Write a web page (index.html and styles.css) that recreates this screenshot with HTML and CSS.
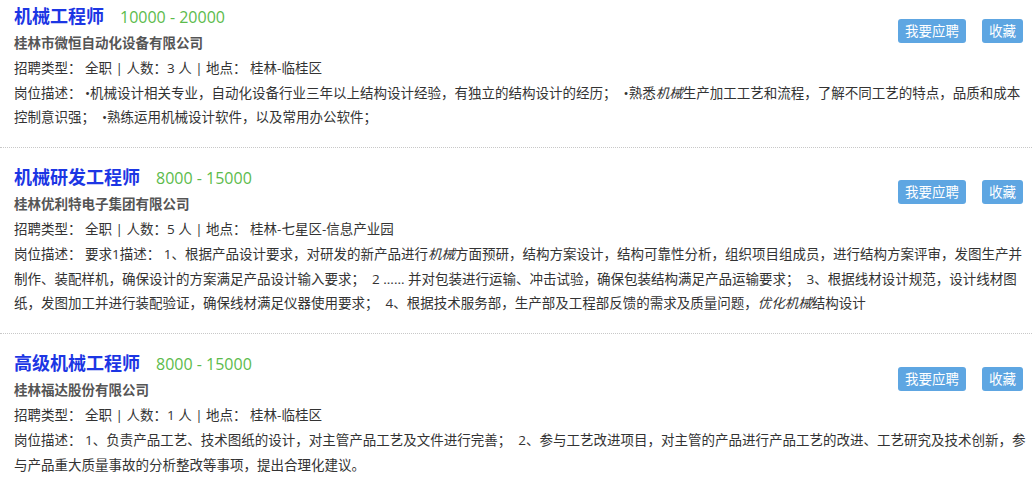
FILE: index.html
```html
<!DOCTYPE html>
<html lang="zh-CN">
<head>
<meta charset="utf-8">
<title>职位列表</title>
<link rel="stylesheet" href="styles.css">
</head>
<body>
<div class="job-list">
  <div class="job">
    <div class="job-head">
      <a class="job-title">机械工程师</a><span class="salary">10000 - 20000</span>
    </div>
    <div class="actions"><a class="btn">我要应聘</a><a class="btn">收藏</a></div>
    <div class="company">桂林市微恒自动化设备有限公司</div>
    <div class="info">招聘类型：&nbsp;全职 | 人数：3 人 | 地点：&nbsp;桂林-临桂区</div>
    <div class="desc">岗位描述：&nbsp;•机械设计相关专业，自动化设备行业三年以上结构设计经验，有独立的结构设计的经历；&nbsp; •熟悉<em>机械</em>生产加工工艺和流程，了解不同工艺的特点，品质和成本控制意识强；&nbsp; •熟练运用机械设计软件，以及常用办公软件；</div>
  </div>
  <div class="job">
    <div class="job-head">
      <a class="job-title">机械研发工程师</a><span class="salary">8000 - 15000</span>
    </div>
    <div class="actions"><a class="btn">我要应聘</a><a class="btn">收藏</a></div>
    <div class="company">桂林优利特电子集团有限公司</div>
    <div class="info">招聘类型：&nbsp;全职 | 人数：5 人 | 地点：&nbsp;桂林-七星区-信息产业园</div>
    <div class="desc">岗位描述：&nbsp;要求1描述：&nbsp;1、根据产品设计要求，对研发的新产品进行<em>机械</em>方面预研，结构方案设计，结构可靠性分析，组织项目组成员，进行结构方案评审，发图生产并制作、装配样机，确保设计的方案满足产品设计输入要求；&nbsp; 2 ...... 并对包装进行运输、冲击试验，确保包装结构满足产品运输要求；&nbsp; 3、根据线材设计规范，设计线材图纸，发图加工并进行装配验证，确保线材满足仪器使用要求；&nbsp; 4、根据技术服务部，生产部及工程部反馈的需求及质量问题，<em>优化机械</em>结构设计</div>
  </div>
  <div class="job">
    <div class="job-head">
      <a class="job-title">高级机械工程师</a><span class="salary">8000 - 15000</span>
    </div>
    <div class="actions"><a class="btn">我要应聘</a><a class="btn">收藏</a></div>
    <div class="company">桂林福达股份有限公司</div>
    <div class="info">招聘类型：&nbsp;全职 | 人数：1 人 | 地点：&nbsp;桂林-临桂区</div>
    <div class="desc">岗位描述：&nbsp;1、负责产品工艺、技术图纸的设计，对主管产品工艺及文件进行完善；&nbsp; 2、参与工艺改进项目，对主管的产品进行产品工艺的改进、工艺研究及技术创新，参与产品重大质量事故的分析整改等事项，提出合理化建议。</div>
  </div>
</div>
</body>
</html>
```

FILE: styles.css
```css
html, body {
  margin: 0;
  padding: 0;
  background: #ffffff;
}

body {
  font-family: "Open Sans", "Noto Sans CJK SC", sans-serif;
  font-size: 13.5px;
  color: #333333;
}

.job-list {
  display: flex;
  flex-direction: column;
}

.job {
  display: grid;
  grid-template-columns: 1fr auto;
  padding: 17px 9px 17px 14px;
  border-bottom: 1px dotted #c8c8c8;
}

.job:first-child {
  padding-top: 3.5px;
}

.job:last-child {
  border-bottom: none;
}

.job-head {
  grid-column: 1;
  grid-row: 1;
  line-height: 25px;
  white-space: nowrap;
}

.job-title {
  font-size: 18px;
  font-weight: bold;
  color: #1c36e4;
  text-decoration: none;
}

.salary {
  margin-left: 16px;
  font-size: 16px;
  color: #5cbb4c;
}

.actions {
  grid-column: 2;
  grid-row: 1 / 3;
  display: flex;
  gap: 16px;
  align-self: start;
  margin-top: 15.5px;
}

.btn {
  display: block;
  height: 24px;
  line-height: 24px;
  padding: 0 7px;
  background: #5ea6e2;
  color: #ffffff;
  border-radius: 3px;
  font-size: 13.5px;
}

.company {
  grid-column: 1;
  grid-row: 2;
  line-height: 25px;
  font-weight: bold;
  color: #555555;
}

.info {
  grid-column: 1 / 3;
  grid-row: 3;
  line-height: 25px;
}

.desc {
  grid-column: 1 / 3;
  grid-row: 4;
  margin-right: -3px;
  line-height: 24.7px;
}

.desc em {
  font-style: italic;
}
```
